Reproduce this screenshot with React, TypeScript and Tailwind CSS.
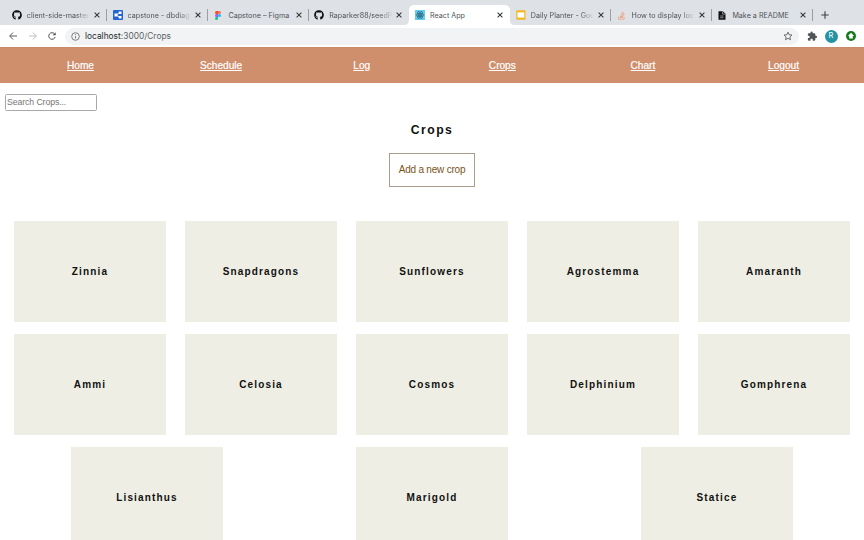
import React from 'react';
import { FaGithub, FaStackOverflow } from 'react-icons/fa';
import { MdExtension } from 'react-icons/md';

const Close = () => (
  <svg viewBox="0 0 6 6" className="h-[6px] w-[6px] shrink-0" stroke="#34373b" strokeWidth="1.05">
    <path d="M.6.6l4.8 4.8M5.4.6L.6 5.4" />
  </svg>
);

const DbIcon = () => (
  <svg viewBox="0 0 10 10" className="h-[10px] w-[10px]">
    <rect width="10" height="10" rx="1" fill="#2463d4" />
    <path d="M3 5L7 2.8M3 5l4 2.3" stroke="#fff" strokeWidth=".8" />
    <path d="M1.5 3.5h3v3h-3zM5.7 1.5h2.8v2.6H5.7zM5.7 5.9h2.8v2.6H5.7z" fill="#fff" />
  </svg>
);

const FigmaIcon = () => (
  <svg viewBox="0 0 6 9" className="h-[9px] w-[6px]">
    <path d="M3 0H1.5a1.5 1.5 0 000 3H3z" fill="#f24e1e" />
    <path d="M3 0h1.5a1.5 1.5 0 010 3H3z" fill="#ff7262" />
    <path d="M3 3H1.5a1.5 1.5 0 000 3H3z" fill="#a259ff" />
    <circle cx="4.5" cy="4.5" r="1.5" fill="#1abcfe" />
    <path d="M3 6H1.5A1.5 1.5 0 103 7.5z" fill="#0acf83" />
  </svg>
);

const ReactIcon = () => (
  <svg viewBox="0 0 10 10" className="h-[10px] w-[10px]" fill="none" stroke="#20495a" strokeWidth=".5">
    <rect width="10" height="10" fill="#61cdef" stroke="none" />
    <ellipse cx="5" cy="5" rx="4" ry="1.6" />
    <ellipse cx="5" cy="5" rx="4" ry="1.6" transform="rotate(60 5 5)" />
    <ellipse cx="5" cy="5" rx="4" ry="1.6" transform="rotate(120 5 5)" />
    <circle cx="5" cy="5" r=".6" fill="#20495a" />
  </svg>
);

const SlidesIcon = () => (
  <svg viewBox="0 0 10 10" className="h-[10px] w-[10px]">
    <rect x=".3" y=".3" width="9.2" height="9.4" rx=".6" fill="#f4b51e" />
    <rect x="1.5" y="2.4" width="6.8" height="5.2" fill="#fff" />
  </svg>
);

const ReadmeIcon = () => (
  <svg viewBox="0 0 8 9" className="h-[9px] w-[8px]">
    <path d="M.5.3h4.3l2.7 2.5v5.9h-7z" fill="#111" />
    <path d="M4.6.5v2.6h2.6M2.2 5h3.3M2.2 6.7h3.3" stroke="#dee1e6" strokeWidth=".6" fill="none" />
  </svg>
);

const tabs = [
  { title: 'client-side-master', icon: <FaGithub size={10} color="#111" />, fade: true },
  { title: 'capstone - dbdiag', icon: <DbIcon />, fade: true },
  { title: 'Capstone – Figma', icon: <FigmaIcon />, fade: false },
  { title: 'Raparker88/seedP', icon: <FaGithub size={10} color="#111" />, fade: true },
  { title: 'React App', icon: <ReactIcon />, fade: false, active: true },
  { title: 'Daily Planter - Goo', icon: <SlidesIcon />, fade: true },
  { title: 'How to display loc', icon: <FaStackOverflow size={9} color="#ee9c78" />, fade: true },
  { title: 'Make a README', icon: <ReadmeIcon />, fade: false },
];

function TabStrip() {
  return (
    <div className="flex h-[25px] items-end bg-[#dee1e6] pl-[6.3px]">
      {tabs.map((t, i) => (
        <div
          key={t.title}
          className={`relative flex h-5 w-[100.8px] shrink-0 items-center pl-[5px] ${t.active ? 'rounded-t-[5px] bg-white' : ''}`}
        >
          {t.active && (
            <svg viewBox="0 0 111 5" className="absolute -left-[5px] bottom-0 h-[5px] w-[110.8px]" fill="#fff">
              <path d="M0 5Q5 5 5 0V5zM111 5Q106 5 106 0V5z" />
            </svg>
          )}
          <div className="flex w-[11px] shrink-0 justify-center">{t.icon}</div>
          <div
            className={`ml-[4.5px] w-[62.5px] whitespace-nowrap pt-px text-[7.15px] leading-[10px] tracking-[0.02px] text-[#505357] ${t.fade ? '[mask-image:linear-gradient(to_right,black_80%,transparent_102%)]' : ''}`}
          >
            {t.title}
          </div>
          <div className="ml-[4.8px] flex"><Close /></div>
          {i !== 3 && i !== 4 && <i className="absolute right-0 top-[4px] h-3 w-px bg-[#9b9ea3]" />}
        </div>
      ))}
      <svg viewBox="0 0 8 8" className="mb-[6px] ml-[8.5px] h-2 w-2" stroke="#3c4043" strokeWidth="1.1">
        <path d="M4 .3v7.4M.3 4h7.4" />
      </svg>
    </div>
  );
}

function Toolbar() {
  return (
    <div className="flex h-[22px] items-center bg-white pl-[9px] pr-[8px]">
      <svg viewBox="0 0 8 8" className="h-2 w-2" fill="none" stroke="#505357" strokeWidth=".95">
        <path d="M8 4H.8M4.1.5L.7 4l3.4 3.5" />
      </svg>
      <svg viewBox="0 0 8 8" className="ml-[11.5px] h-2 w-2" fill="none" stroke="#b9bbbe" strokeWidth=".95">
        <path d="M0 4h7.2M3.9.5L7.3 4 3.9 7.5" />
      </svg>
      <svg viewBox="0 0 8 8" className="ml-[11px] h-2 w-2" fill="none" stroke="#505357" strokeWidth="1">
        <path d="M7.2 5A3.3 3.3 0 116.5 1.8" />
        <path d="M7.7.2v3.1H4.6z" fill="#505357" stroke="none" />
      </svg>
      <div className="ml-[9px] flex h-[17px] w-[734px] items-center rounded-full bg-[#f1f3f4] pl-[6.5px] pr-[5.5px]">
        <svg viewBox="0 0 9 9" className="h-[9px] w-[9px]" fill="none" stroke="#5f6368" strokeWidth=".8">
          <circle cx="4.5" cy="4.5" r="3.8" />
          <path d="M4.5 4v2.6M4.5 2.2v.9" />
        </svg>
        <span className="ml-[5px] text-[8.4px] leading-none text-[#606468]">
          <span className="text-[#292b2e]">localhost</span>:3000/Crops
        </span>
        <svg viewBox="0 0 24 24" className="ml-auto h-[10px] w-[10px]" fill="none" stroke="#505357" strokeWidth="2">
          <path d="M12 2.8l2.8 6.2 6.7.7-5 4.6 1.4 6.6-5.9-3.4-5.9 3.4 1.4-6.6-5-4.6 6.7-.7z" />
        </svg>
      </div>
      <MdExtension size={10.5} color="#505357" className="ml-[8.5px]" />
      <div className="ml-[7px] flex h-[13px] w-[13px] items-center justify-center rounded-full bg-[#2593a3] text-[7.5px] leading-none text-white">R</div>
      <svg viewBox="0 0 10 10" className="ml-auto h-[10px] w-[10px]">
        <circle cx="5" cy="5" r="5" fill="#147a1c" />
        <path d="M5 1.8L8.1 5H6.8v2.6H3.2V5H1.9z" fill="#fff" />
      </svg>
    </div>
  );
}

function CropRow({ names }: { names: string[] }) {
  return (
    <div className="flex justify-around">
      {names.map((n) => (
        <div
          key={n}
          className="flex h-[101px] w-[151.2px] items-center justify-center bg-[#eeeee4] text-[10px] font-bold leading-[14px] tracking-[1.16px] text-[#111]"
        >
          {n}
        </div>
      ))}
    </div>
  );
}

export default function App() {
  return (
    <div className="h-[540px] w-[864px] overflow-hidden bg-white font-['Liberation_Sans',Arial,sans-serif]">
      <header className="font-[Inter,sans-serif]">
        <TabStrip />
        <Toolbar />
      </header>
      <nav className="flex h-[35.5px] items-center border-t border-[#c98b6b] bg-[#cf8e6c] px-[10.2px] text-[10.1px] text-white [-webkit-text-stroke:0.2px_white]">
        {['Home', 'Schedule', 'Log', 'Crops', 'Chart', 'Logout'].map((n) => (
          <a key={n} className="flex-1 text-center underline">{n}</a>
        ))}
      </nav>
      <main className="px-[4.5px]">
        <input
          placeholder="Search Crops..."
          className="mt-[11.5px] block h-[16.5px] w-[92.5px] rounded-[1.5px] border border-[#a8a8a8] px-[1.5px] text-[8.7px] tracking-[-0.08px] text-[#222] placeholder:text-[#757575]"
        />
        <h1 className="mt-[11px] text-center text-[12.2px] font-bold leading-[16px] tracking-[1.5px] text-[#111]">Crops</h1>
        <button className="mx-auto mt-[15.5px] block h-[34px] w-[86.5px] border border-[#a99d8d] whitespace-nowrap pb-px text-[10px] tracking-[-0.2px] text-[#7b5318]">
          Add a new crop
        </button>
        <div className="mt-[34px] flex flex-col gap-[12.2px]">
          <CropRow names={['Zinnia', 'Snapdragons', 'Sunflowers', 'Agrostemma', 'Amaranth']} />
          <CropRow names={['Ammi', 'Celosia', 'Cosmos', 'Delphinium', 'Gomphrena']} />
          <CropRow names={['Lisianthus', 'Marigold', 'Statice']} />
        </div>
      </main>
    </div>
  );
}
